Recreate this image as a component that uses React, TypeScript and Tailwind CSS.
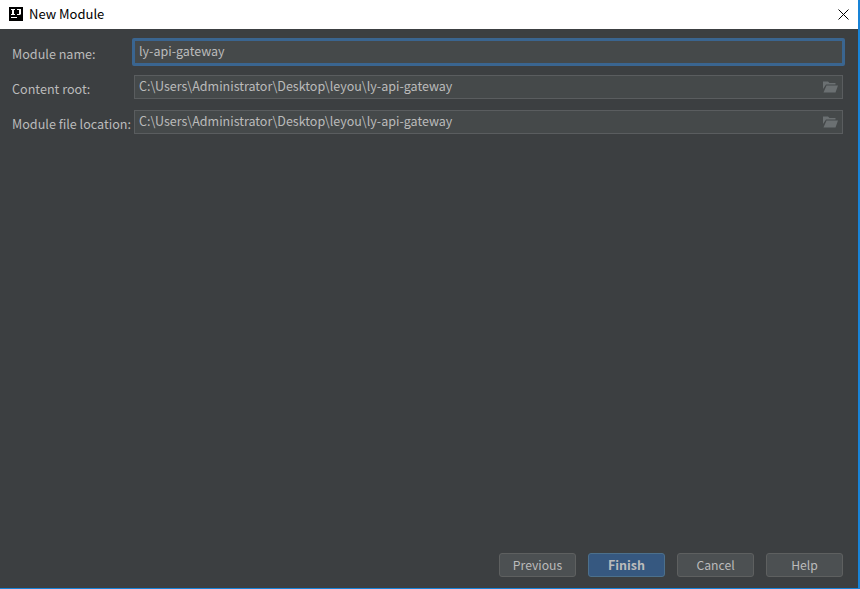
import type { ReactNode } from "react";

const font = "font-['Noto_Sans_CJK_SC','Noto_Sans',sans-serif]";

function FolderIcon() {
  return (
    <svg width="15" height="12" viewBox="0 0 15 12" className="shrink-0">
      <path d="M0 0.5h5l1.5 1.5h6v1.5H3L0 8z" fill="#6b7072" />
      <path d="M3.5 4.5H15l-2.5 7H0.5z" fill="#6b7072" />
    </svg>
  );
}

function PathField({ value }: { value: string }) {
  return (
    <div className="flex h-6 flex-1 items-center justify-between border border-[#5a5d5f] bg-[#45494a] pl-1 pr-1">
      <span className="pb-px text-[12.5px] leading-none text-[#bbbbbb]">{value}</span>
      <FolderIcon />
    </div>
  );
}

function Row({ label, children, className }: { label: string; children: ReactNode; className: string }) {
  return (
    <div className={`flex items-center ${className}`}>
      <label className="w-[122px] shrink-0 whitespace-nowrap pt-1 text-[12.6px] leading-none text-[#bbbbbb]">{label}</label>
      {children}
    </div>
  );
}

function DialogButton({ label, primary }: { label: string; primary?: boolean }) {
  return (
    <button
      className={`h-6 w-[77px] rounded-[3px] border leading-none ${
        primary
          ? "border-[#4c708c] bg-[#365880] text-[12.5px] font-bold text-[#bbbbbb]"
          : "border-[#5e6060] bg-[#4c5052] text-[12.2px] text-[#bbbbbb]"
      }`}
    >
      {label}
    </button>
  );
}

export default function App() {
  return (
    <div className={`flex h-[589px] w-[860px] flex-col overflow-hidden ${font}`}>
      <div className="flex min-h-0 flex-1 border-b border-[#1883d7]">
        <div className="flex min-w-0 flex-1 flex-col">
          <header className="flex h-[29px] shrink-0 items-center bg-white pl-[9px] pr-[9px]">
            <svg width="14" height="14" viewBox="0 0 14 14" className="mb-px shrink-0">
              <rect width="14" height="14" fill="#000" />
              <path
                d="M2 2h4v1H5v4h1v1H2V7h1V3H2zM8 2h4v5l-1 1H8V7h2V3H8zM2 10h6v1H2z"
                fill="#fff"
              />
            </svg>
            <span className="mb-[2px] ml-[6px] text-[13px] leading-none text-black">New Module</span>
            <svg width="11" height="11" viewBox="0 0 11 11" className="ml-auto">
              <path d="M.5.5l10 10M10.5.5l-10 10" stroke="#000" strokeWidth="1" fill="none" />
            </svg>
          </header>

          <main className="flex min-h-0 flex-1 flex-col bg-[#3c3f41] pl-3 pr-[15px]">
            <Row label="Module name:" className="mt-[9px]">
              <div className="-ml-[2px] -mr-[2px] flex h-[28px] flex-1 items-center rounded-[2px] border-[3px] border-[#3a6590] bg-[#45494a] pl-1">
                <span className="pb-px text-[12.5px] leading-none text-[#bbbbbb]">ly-api-gateway</span>
              </div>
            </Row>
            <Row label="Content root:" className="mt-[9px]">
              <PathField value="C:\Users\Administrator\Desktop\leyou\ly-api-gateway" />
            </Row>
            <Row label="Module file location:" className="mt-[11px]">
              <PathField value="C:\Users\Administrator\Desktop\leyou\ly-api-gateway" />
            </Row>

            <footer className="mb-[11px] mt-auto flex justify-end gap-3">
              <DialogButton label="Previous" />
              <DialogButton label="Finish" primary />
              <DialogButton label="Cancel" />
              <DialogButton label="Help" />
            </footer>
          </main>
        </div>
        <div className="w-[2px] shrink-0 bg-[#1883d7]" />
      </div>
    </div>
  );
}
